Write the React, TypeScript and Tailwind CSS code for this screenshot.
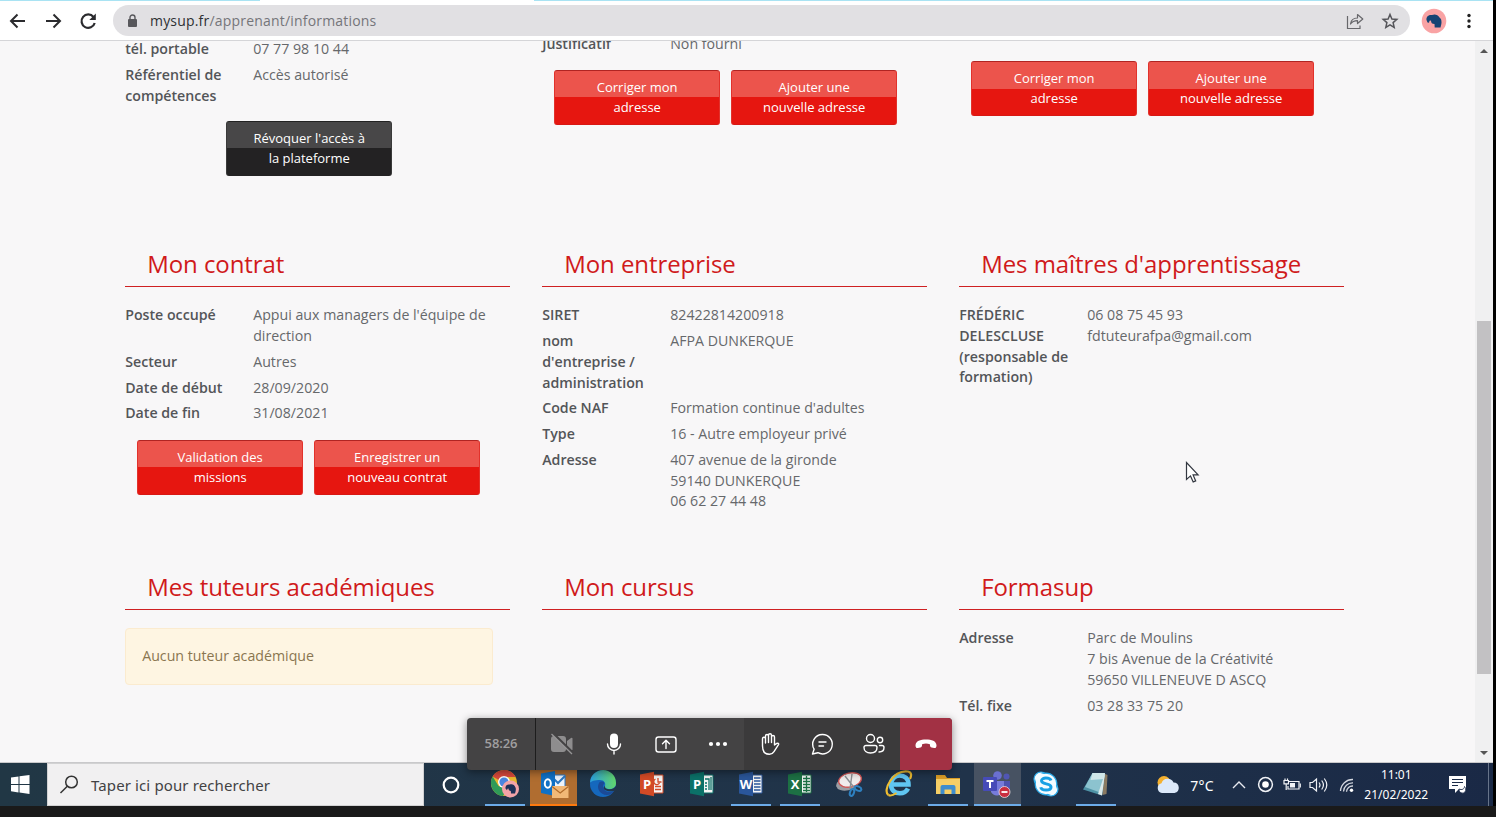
import type { ReactNode } from "react";

type RowData = { label: ReactNode; value: ReactNode[] };

function Row({ label, value }: RowData) {
  return (
    <div className="mb-[5.1px] flex leading-[20.7px]">
      <div className="w-[128px] shrink-0 pr-3 font-semibold text-[#535558]">{label}</div>
      <div className="flex-1 whitespace-nowrap text-[#66686b]">
        {value.map((v, i) => (
          <div key={i}>{v}</div>
        ))}
      </div>
    </div>
  );
}

function Button({ lines, dark }: { lines: [string, string]; dark?: boolean }) {
  const tone = dark
    ? "border-[#3a3a3a] border-t-[#222] border-b-[#232223] bg-[linear-gradient(#484748_50%,#232223_50%)]"
    : "border-[#e2322c] border-t-[#b02422] border-b-[#d81814] bg-[linear-gradient(#ec544c_50%,#e61610_50%)]";
  return (
    <button
      className={`flex h-[55px] w-[166px] shrink-0 flex-col items-center justify-center rounded-[3px] border pb-px text-[13px] leading-[20px] text-white ${tone}`}
    >
      <span>{lines[0]}</span>
      <span>{lines[1]}</span>
    </button>
  );
}

function Section({ title, children }: { title: string; children?: ReactNode }) {
  return (
    <section className="w-[384.5px]">
      <h2 className="mb-[18.3px] h-[44px] border-b border-[#cf2022] pl-[22px] text-[24px] leading-[42px] tracking-[-0.07px] text-[#d01a1b]">
        {title}
      </h2>
      {children}
    </section>
  );
}

function BrowserBar() {
  return (
    <header className="flex h-[41px] shrink-0 flex-col border-b border-[#d5d5d8] bg-white">
      <div className="flex h-px justify-between">
        <div className="w-[260px] bg-[#a9e3f3]" />
        <div className="w-[959px] bg-[#a9e3f3]" />
      </div>
      <div className="flex flex-1 items-center">
        <div className="flex w-[113px] items-center gap-[15px] pl-2 text-[#2b2b2e]">
          {["M17 10H3M9.5 3.5 3 10l6.500 6.500", "M3 10h14M10.500 3.500 17 10l-6.500 6.500"].map((d) => (
            <svg key={d} width="20" height="20" viewBox="0 0 20 20" fill="none" stroke="currentColor" strokeWidth="2">
              <path d={d} />
            </svg>
          ))}
          <svg width="20" height="20" viewBox="0 0 20 20" fill="none" stroke="currentColor" strokeWidth="2.200">
            <path d="M15.500 6A6.700 6.700 0 1 0 16.700 12" />
            <path d="M17.800 2.500v6.500h-6.500z" fill="currentColor" stroke="none" />
          </svg>
        </div>
        <div className="flex h-[31px] w-[1297px] items-center rounded-full bg-[#e1e0e3] pl-[14px] pr-[11px]">
          <svg width="11" height="14" viewBox="0 0 11 14">
            <rect x="1" y="5" width="9" height="8" rx="1" fill="#58585c" />
            <path d="M3 5.500V3.500a2.500 2.500 0 0 1 5 0v2" fill="none" stroke="#58585c" strokeWidth="1.400" />
          </svg>
          <div className="ml-3 flex-1 font-['Open_Sans',sans-serif] text-[14px] tracking-[0.19px] text-[#75757a]">
            <span className="text-[#2e3033]">mysup.fr</span>/apprenant/informations
          </div>
          <svg width="18" height="18" viewBox="0 0 18 18" fill="none" stroke="#67676b" strokeWidth="1.200">
            <path d="M1.500 4v12.500h12.500v-3" />
            <path d="M4.500 12C5 8 7.500 6 11.500 6V2.500L16.800 7l-5.300 4.500V8.700C8.500 8.700 6.200 9.500 4.500 12z" strokeLinejoin="round" />
          </svg>
          <svg className="ml-[17px]" width="18" height="18" viewBox="0 0 18 18" fill="none" stroke="#55555a" strokeWidth="1.500">
            <path d="m9 2.500 1.900 4.500 4.900.4-3.700 3.200 1.100 4.800L9 12.900l-4.200 2.500 1.100-4.800-3.700-3.200 4.900-.4z" />
          </svg>
        </div>
        <svg className="ml-[11px]" width="26" height="26" viewBox="0 0 26 26">
          <circle cx="13" cy="13" r="12.300" fill="#f9a3a4" />
          <path d="M5.500 12C5 8.500 8 6.500 11 7c3-1.500 6 0 7.500 2.500 1.700 1.200 2 2.500 2 5 0 1.500-.5 2.500-1 5h-5.800l-.2-3.500c-2.500 0-3.500-1-3.500-3.500l-1.500.3-.5 2-1.500-.3z" fill="#154373" />
        </svg>
        <svg className="ml-[19px]" width="6" height="18" viewBox="0 0 6 18" fill="#222">
          <circle cx="3" cy="3.500" r="1.700" />
          <circle cx="3" cy="9" r="1.700" />
          <circle cx="3" cy="14.500" r="1.700" />
        </svg>
      </div>
    </header>
  );
}

function Scrollbar() {
  return (
    <div className="flex w-[18px] shrink-0 flex-col items-center bg-[#f0f0f1]">
      <svg className="mt-[6px]" width="8" height="8" viewBox="0 0 8 8">
        <path d="M0 6 4 2l4 4z" fill="#555" />
      </svg>
      <div className="mt-[266px] h-[353px] w-[14px] bg-[#c2c1c3]" />
      <svg className="mt-[75px]" width="8" height="8" viewBox="0 0 8 8">
        <path d="M0 2h8L4 6z" fill="#555" />
      </svg>
    </div>
  );
}

function CallBar() {
  const stroke = { fill: "none", stroke: "#fff", strokeWidth: 1.400, strokeLinecap: "round", strokeLinejoin: "round" } as const;
  const cell = "flex w-[52px] items-center justify-center";
  return (
    <div className="absolute left-[467px] top-[718px] flex h-[52px] w-[485px] overflow-hidden rounded-[4px] bg-[#444344] shadow-[0_2px_8px_rgba(0,0,0,0.45)]">
      <div className="flex w-[69px] items-center justify-center border-r border-[#1d1d1d] font-['Open_Sans',sans-serif] text-[13px] font-semibold tracking-[-0.1px] text-[#a09fa0]">
        58:26
      </div>
      <div className={cell}>
        <svg width="24" height="24" viewBox="0 0 24 24">
          <path d="M4 4h9a3 3 0 0 1 3 3v10a3 3 0 0 1-3 3H4a3 3 0 0 1-3-3V7a3 3 0 0 1 3-3zm13 5 4-3q1.500-.5 1.500.5v11q0 1-1.500.5l-4-3z" fill="#8e8d8e" />
          <path d="m2.500 1 20.500 20" stroke="#444344" strokeWidth="2.500" />
          <path d="m1.500 2 20.500 20" stroke="#969596" strokeWidth="1.300" />
        </svg>
      </div>
      <div className={cell}>
        <svg width="24" height="24" viewBox="0 0 24 24">
          <rect x="8" y="1.500" width="8" height="14.500" rx="4" fill="#fff" />
          <path d="M5.500 12a6.500 6.500 0 0 0 13 0M12 18.500V22" {...stroke} />
        </svg>
      </div>
      <div className={cell}>
        <svg width="24" height="24" viewBox="0 0 24 24">
          <rect x="2" y="5" width="20" height="15" rx="2.500" {...stroke} />
          <path d="M12 16.500v-8M8.500 11.800 12 8.300l3.500 3.500" {...stroke} />
        </svg>
      </div>
      <div className={cell}>
        <svg width="20" height="6" viewBox="0 0 20 6" fill="#fff">
          <circle cx="3" cy="3" r="2.100" />
          <circle cx="10" cy="3" r="2.100" />
          <circle cx="17" cy="3" r="2.100" />
        </svg>
      </div>
      <div className="flex bg-[#3b3a3b]">
        <div className={cell}>
          <svg width="24" height="24" viewBox="0 0 24 24">
            <path d="M4.500 14V6.800a1.500 1.500 0 0 1 3 0V11 4a1.500 1.500 0 0 1 3 0v6.500V3.200a1.500 1.500 0 0 1 3 0v7.300V5a1.500 1.500 0 0 1 3 0v8l2.300-1.600c1-.6 2.200.3 1.700 1.200l-4.500 7c-1.200 1.900-2.500 2.700-4.500 2.700-4.500 0-7-3-7-8.300z" {...stroke} />
          </svg>
        </div>
        <div className={cell}>
          <svg width="24" height="24" viewBox="0 0 24 24">
            <path d="M12.500 2.500a9.700 9.700 0 1 1-4.600 18.200L2.500 22l1.600-4.800A9.700 9.700 0 0 1 12.500 2.500zM9 10h7M9 14h4.500" {...stroke} />
          </svg>
        </div>
        <div className={cell}>
          <svg width="24" height="24" viewBox="0 0 24 24">
            <circle cx="8.500" cy="6.500" r="4" {...stroke} />
            <circle cx="18" cy="8" r="2.700" {...stroke} />
            <path d="M4 13.500h9a2 2 0 0 1 2 2c0 3.500-2.500 5.500-6.500 5.500S2 19 2 15.500a2 2 0 0 1 2-2zM17.500 13.500H20a2 2 0 0 1 2 2c0 3-2 4.500-5 4.500" {...stroke} />
          </svg>
        </div>
      </div>
      <div className="flex w-[52px] items-center justify-center bg-[#a23144]">
        <svg width="24" height="12" viewBox="0 0 24 12">
          <path d="M1.500 7.500C1.500 3 6.500 1.500 12 1.500S22.500 3 22.500 7.500c0 1.800-.8 2.800-2.300 2.500l-2.600-.5c-1-.2-1.500-.8-1.600-2l-.1-1.300q-3.900-1.200-7.800 0L8 7.500c-.1 1.200-.6 1.800-1.600 2L3.800 10c-1.500.3-2.300-.7-2.300-2.500z" fill="#fff" />
        </svg>
      </div>
    </div>
  );
}

function OfficeIcon({ letter, color, lines }: { letter: string; color: string; lines: string }) {
  return (
    <svg width="26" height="26" viewBox="0 0 26 26">
      <path d="M14 4h10v18H14z" fill="#f5f5f5" stroke={color} strokeWidth="1" />
      <path d={lines} stroke={color} strokeWidth="1.300" fill="none" />
      <path d="M1 3.500 15 .8v24.400L1 22.500z" fill={color} />
      <text x="8" y="18" textAnchor="middle" fill="#fff" fontSize="13" fontWeight="700" fontFamily="Open Sans, sans-serif">
        {letter}
      </text>
    </svg>
  );
}

const icons = {
  chrome: (
    <svg width="30" height="30" viewBox="0 0 30 30">
      <circle cx="14" cy="14" r="13" fill="#e9b92f" />
      <path d="M14 14 2.700 7.500A13 13 0 0 1 25.500 8L14 8z" fill="#d9493c" />
      <path d="M2.700 7.500A13 13 0 0 0 13 27l5-8-9.500-2z" fill="#2f9a58" />
      <circle cx="14" cy="13" r="6" fill="#fff" />
      <circle cx="14" cy="13" r="4.600" fill="#4a86e0" />
      <circle cx="20.500" cy="20" r="8.500" fill="#f3a4a8" />
      <path d="M15.500 19.500c-.5-3 2-4.500 4.200-4 2.500-1 5 .5 5.500 2.500 1 1 .8 4-.2 6.500h-4l-.2-2.500c-1.500 0-2.300-1-2.300-2.500l-1 .3-.5 1.500z" fill="#1d3157" />
    </svg>
  ),
  outlook: (
    <svg width="30" height="30" viewBox="0 0 30 30">
      <path d="M13 6h13v14H13z" fill="#eef4fb" stroke="#2b78c4" />
      <path d="m14 9 5 5 7-7" fill="none" stroke="#2b78c4" strokeWidth="2" />
      <path d="M2 4.500 16 2v25L2 24z" fill="#1071c6" />
      <ellipse cx="8.800" cy="14.500" rx="3" ry="4.200" fill="none" stroke="#fff" strokeWidth="2" />
      <path d="M13 17h16.500v12H13z" fill="#f1b877" />
      <path d="m13 17.500 8.200 6.500 8.200-6.500" fill="none" stroke="#b06a2a" strokeWidth="1.200" />
    </svg>
  ),
  edge: (
    <svg width="28" height="28" viewBox="0 0 28 28">
      <defs>
        <linearGradient id="edgeTop" x1="0" x2="1">
          <stop offset="0" stopColor="#2a9fe0" />
          <stop offset="1" stopColor="#62d66b" />
        </linearGradient>
      </defs>
      <circle cx="14" cy="14" r="13" fill="#1568bd" />
      <path d="M1 13A13 13 0 0 1 27 13c0 4-3 6-6.500 6-3 0-5-1-4.500-3 1-3-1-6-5-6-5 0-9 1-10 3z" fill="url(#edgeTop)" />
      <path d="M10 13c-3 5 1 12 8 12 3 0 5.500-1.500 7-4-5 2-10 1-11-4-.3-2 1-3 1.500-4-2-2.200-4.500-1.500-5.500 0z" fill="#1b4a96" />
      <path d="M16 16c-.5 2.500 2 3.500 5 3.200 2.500-.2 5-1.200 6.500-4v4.500c-3 2-8 2.300-11.500.3-2-1.500-1.500-3-0-4z" fill="#21364a" />
    </svg>
  ),
  powerpoint: <OfficeIcon letter="P" color="#d24a26" lines="M16 15.500h6M16 18.500h6M19 7v4h3.500M16.500 8a3 3 0 1 0 4 4" />,
  publisher: <OfficeIcon letter="P" color="#0b7168" lines="M16 8h4v11M16 12h2M16 15h2M16 18h2M22 6v13" />,
  word: <OfficeIcon letter="W" color="#2a569a" lines="M16 7h6.500M16 10h6.500M16 13h6.500M16 16h6.500M16 19h6.500" />,
  excel: <OfficeIcon letter="X" color="#1d7044" lines="M16 7.500h7M16 10.500h7M16 13.500h7M16 16.500h7M16 19.500h7M19.500 5v16" />,
  snip: (
    <svg width="28" height="28" viewBox="0 0 28 28">
      <ellipse cx="12" cy="14" rx="11" ry="6.500" transform="rotate(-12 12 14)" fill="#9a9da3" />
      <ellipse cx="15" cy="10" rx="11.500" ry="7" transform="rotate(-12 15 10)" fill="#f1eced" stroke="#cf5555" strokeWidth="1.300" />
      <path d="m10 6 11 14M17 4l-2 15" stroke="#8b8f94" strokeWidth="1.400" />
      <ellipse cx="17" cy="22.500" rx="2" ry="3.500" transform="rotate(20 17 22.500)" fill="none" stroke="#2e80c0" strokeWidth="2" />
      <ellipse cx="23" cy="18.500" rx="3.500" ry="2" transform="rotate(25 23 18.500)" fill="none" stroke="#2e80c0" strokeWidth="2" />
    </svg>
  ),
  explorer: (
    <svg width="28" height="28" viewBox="0 0 28 28" fill="none">
      <path d="M6 14.500h17.500c0-6-4-9-9-9s-8.500 4-8.500 9c0 5.500 4 8.800 8.800 8.800 4 0 6.700-1.800 8.200-4.800" stroke="#60c6f2" strokeWidth="4.600" />
      <path d="M3.500 25C-3 21 8-.5 23 1.500c4 .8 3.500 4.500 2 7.500" stroke="#eebd31" strokeWidth="2.200" />
      <path d="M3.500 25c2 1 5 0 8-2" stroke="#eebd31" strokeWidth="2" />
    </svg>
  ),
  folder: (
    <svg width="26" height="24" viewBox="0 0 26 24">
      <path d="M1 3h9l2 3h13v15H1z" fill="#dc9e27" />
      <path d="M1 7h24v15H1z" fill="#f6cf66" />
      <path d="M5.500 22v-7q0-2 2-2h11q2 0 2 2v7h-4v-4.500h-7V22z" fill="#3e8dcd" />
    </svg>
  ),
  teams: (
    <svg width="30" height="28" viewBox="0 0 30 28">
      <circle cx="15.500" cy="5.500" r="4.300" fill="#6b70d0" />
      <circle cx="24.500" cy="6.500" r="3" fill="#5056b4" />
      <path d="M20 11h8v7a5 5 0 0 1-8 3z" fill="#4d53b0" />
      <path d="M9 11h13v8a7 7 0 0 1-13 3z" fill="#777cdb" />
      <rect x="1" y="7" width="14" height="14" rx="1" fill="#464bb8" />
      <path d="M4.500 11h7M8 11v7" stroke="#fff" strokeWidth="2" />
      <circle cx="22.500" cy="22" r="5.500" fill="#c92d3f" stroke="#e8dfe2" strokeWidth=".8" />
      <path d="M19.500 22h6" stroke="#fff" strokeWidth="1.800" />
    </svg>
  ),
  skype: (
    <svg width="26" height="26" viewBox="0 0 26 26">
      <g fill="#f4fbff" stroke="#29a9e8" strokeWidth="1.200">
        <circle cx="8" cy="8" r="7" />
        <circle cx="18" cy="18" r="7" />
        <circle cx="13" cy="13" r="10.800" />
      </g>
      <circle cx="8.500" cy="8.500" r="6" fill="#f4fbff" />
      <circle cx="17.500" cy="17.500" r="6" fill="#f4fbff" />
      <path d="M18 9.500C17 6.500 8.500 6 8.500 9.800c0 4 9.500 2.200 9.500 6.200 0 4.200-9.500 4-10.200.2" fill="none" stroke="#18a0e4" strokeWidth="3" />
    </svg>
  ),
  notepad: (
    <svg width="28" height="26" viewBox="0 0 28 26">
      <path d="m21 2 4.500 2-1 19-4 1z" fill="#8a7a62" />
      <path d="M10.500 2 23 2l-3 22.500L1 18.500z" fill="#4f93a6" />
      <path d="M10.500 2H23l-3.500 20L3 16z" fill="#8cc3cf" />
      <path d="M10.500 2H23l-1 6-13.500 1z" fill="#cfe6e8" />
      <path d="m23 2-3 22.500-4-1.500z" fill="#dbe9ea" />
    </svg>
  ),
};

const apps: { name: keyof typeof icons; open?: boolean; tone?: string }[] = [
  { name: "chrome", open: true },
  { name: "outlook", tone: "bg-[#b06d30] border-[#ff7a0e]" },
  { name: "edge" },
  { name: "powerpoint" },
  { name: "publisher" },
  { name: "word", open: true },
  { name: "excel", open: true },
  { name: "snip" },
  { name: "explorer" },
  { name: "folder", open: true },
  { name: "teams", tone: "bg-[#475262] border-[#6cabe8]" },
  { name: "skype" },
  { name: "notepad", open: true },
];

function Taskbar() {
  return (
    <footer className="flex h-[43px] shrink-0 items-stretch bg-[linear-gradient(90deg,#213745,#20334a_65%,#1a2946)] font-['Noto_Sans',sans-serif] text-white">
      <div className="flex w-[47px] items-center pl-[11px]">
        <svg width="19" height="19" viewBox="0 0 19 19" fill="#fff">
          <path d="M0 2.600 7.500 1.500V9H0zM8.500 1.300 18.500 0v9h-10zM0 10h7.500v7.400L0 16.300zM8.500 10h10v9l-10-1.400z" />
        </svg>
      </div>
      <div className="flex w-[377px] items-center border border-[#d2d2d3] bg-[#f1f0f1] pl-[11px] text-[#424244]">
        <svg width="20" height="20" viewBox="0 0 20 20" fill="none" stroke="#333" strokeWidth="1.500">
          <circle cx="12.500" cy="7" r="5.800" />
          <path d="M8.300 11.200 1.500 18" />
        </svg>
        <span className="ml-3 pt-px text-[15px] tracking-[0.12px]">Taper ici pour rechercher</span>
      </div>
      <div className="flex w-[56px] items-center justify-center pr-[3px]">
        <svg width="20" height="20" viewBox="0 0 20 20">
          <circle cx="10" cy="10" r="7.300" fill="none" stroke="#fff" strokeWidth="2.200" />
        </svg>
      </div>
      <div className="flex">
        {apps.map((a) => (
          <div key={a.name} className="flex w-[49.25px] justify-center">
            <div
              className={`flex items-center justify-center border-b-2 pt-px ${a.tone ? "w-[47px]" : "w-[40px]"} ${
                a.tone ?? (a.open ? "border-[#6cabe8]" : "border-transparent")
              }`}
            >
              {icons[a.name]}
            </div>
          </div>
        ))}
      </div>
      <div className="ml-[36px] flex items-center">
        <svg width="24" height="20" viewBox="0 0 24 20">
          <circle cx="8" cy="7.500" r="6.500" fill="#f5b12f" />
          <path d="M6 18a5 5 0 0 1-.5-9.800 6.500 6.500 0 0 1 12-.7A5.300 5.300 0 0 1 18.500 18z" fill="#dce9fa" />
        </svg>
        <span className="ml-[10px] w-[33px] pt-px text-[14px] tracking-[0.2px]">7°C</span>
        <svg className="ml-[9px]" width="14" height="10" viewBox="0 0 14 10" fill="none" stroke="#e8eaf0" strokeWidth="1.400">
          <path d="m1 8 6-6 6 6" />
        </svg>
        <svg className="ml-[11px]" width="17" height="17" viewBox="0 0 17 17">
          <circle cx="8.500" cy="8.500" r="6.900" fill="none" stroke="#f0f2f6" strokeWidth="1.500" />
          <circle cx="8.500" cy="8.500" r="3.300" fill="#fff" />
        </svg>
        <svg className="ml-[9px]" width="18" height="14" viewBox="0 0 18 14" fill="none" stroke="#f0f2f6" strokeWidth="1.200">
          <path d="M6 3.500h10V11H5V8M1 2.500h4.500v3.300H1zM2 .5v2M4.500.5v2M3.200 6v6" />
          <path d="M7 5h5v4.500H7z" fill="#f0f2f6" stroke="none" />
          <path d="M17.300 5.500v4" />
        </svg>
        <svg className="ml-[8px]" width="19" height="16" viewBox="0 0 19 16" fill="none" stroke="#f0f2f6" strokeWidth="1.200">
          <path d="M1 5.500h2.500L7.500 2v12l-4-3.500H1zM10 5.500q2 2.500 0 5M12.700 3.500q3.500 4.500 0 9M15.300 1.500q5 6.500 0 13" />
        </svg>
        <svg className="ml-[11px]" width="15" height="16" viewBox="0 0 15 16" fill="none" stroke="#d2d6df" strokeWidth="1.300">
          <path d="M1.500 14A12 12 0 0 1 14 2.500M4.500 14.500A9 9 0 0 1 14 5.800M7.500 14.700A6 6 0 0 1 14 9" />
          <circle cx="12.500" cy="13.300" r="1.700" fill="#fff" stroke="none" />
        </svg>
        <div className="ml-[7px] w-[70px] whitespace-nowrap text-center text-[12px] leading-[19.500px]">
          <div>11:01</div>
          <div>21/02/2022</div>
        </div>
        <svg className="ml-[17px]" width="20" height="19" viewBox="0 0 20 19">
          <path d="M1 1h17v13h-7l-4 4v-4H1z" fill="#fff" />
          <path d="M4 4.500h11M4 7.500h11M4 10.500h6" stroke="#1b2a47" strokeWidth="1.200" />
          <path d="M11 14a3.500 3.500 0 0 0 6 3c1.500-2 .5-4.500-.5-5.500 0 2-2 4-5.500 2.500z" fill="#fff" stroke="#1b2a47" strokeWidth=".8" />
        </svg>
      </div>
      <div className="ml-auto mr-[4px] w-px bg-[#67748a]" />
    </footer>
  );
}

export default function App() {
  return (
    <div className="relative flex h-[817px] w-[1496px] flex-col overflow-hidden bg-[#1a1a1a]">
      <div className="flex h-[806px] w-full flex-col border-r-[3px] border-black">
        <BrowserBar />
        <div className="flex h-[722px] shrink-0 overflow-hidden border-b border-[#c9c9cb] bg-[#f8f7f8]">
          <main className="flex-1 overflow-hidden pl-[125.2px] font-['Open_Sans',sans-serif] text-[14.2px]">
            <div className="flex h-[202px] gap-[32.5px]">
              <div className="-mt-[1.600px] w-[384.5px]">
                <Row label="tél. portable" value={["07 77 98 10 44"]} />
                <Row label="Référentiel de compétences" value={["Accès autorisé"]} />
                <div className="mt-[14.5px] pl-[101px]">
                  <Button dark lines={["Révoquer l'accès à", "la plateforme"]} />
                </div>
              </div>
              <div className="-mt-[6.700px] w-[384.5px]">
                <Row label="Justificatif" value={["Non fourni"]} />
                <div className="mt-[15px] flex gap-[11px] pl-3">
                  <Button lines={["Corriger mon", "adresse"]} />
                  <Button lines={["Ajouter une", "nouvelle adresse"]} />
                </div>
              </div>
              <div className="mt-[20px] flex w-[384.5px] gap-[11px] pl-3">
                <Button lines={["Corriger mon", "adresse"]} />
                <Button lines={["Ajouter une", "nouvelle adresse"]} />
              </div>
            </div>
            <div className="flex h-[323px] gap-[32.5px]">
              <Section title="Mon contrat">
                <Row label="Poste occupé" value={["Appui aux managers de l'équipe de", "direction"]} />
                <Row label="Secteur" value={["Autres"]} />
                <Row label="Date de début" value={["28/09/2020"]} />
                <Row label="Date de fin" value={["31/08/2021"]} />
                <div className="mt-[15.5px] flex gap-[11px] pl-3">
                  <Button lines={["Validation des", "missions"]} />
                  <Button lines={["Enregistrer un", "nouveau contrat"]} />
                </div>
              </Section>
              <Section title="Mon entreprise">
                <Row label="SIRET" value={["82422814200918"]} />
                <Row label={<>nom<br />d'entreprise /<br />administration</>} value={["AFPA DUNKERQUE"]} />
                <Row label="Code NAF" value={["Formation continue d'adultes"]} />
                <Row label="Type" value={["16 - Autre employeur privé"]} />
                <Row label="Adresse" value={["407 avenue de la gironde", "59140 DUNKERQUE", "06 62 27 44 48"]} />
              </Section>
              <Section title="Mes maîtres d'apprentissage">
                <Row
                  label={<>FRÉDÉRIC<br />DELESCLUSE<br />(responsable de<br />formation)</>}
                  value={["06 08 75 45 93", "fdtuteurafpa@gmail.com"]}
                />
              </Section>
            </div>
            <div className="flex gap-[32.5px]">
              <Section title="Mes tuteurs académiques">
                <div className="-mt-[0.8px] flex h-[57px] w-[368px] items-center rounded-[4px] border border-[#fbebcf] bg-[#fef5e2] pb-px pl-4 text-[#8a7650]">
                  Aucun tuteur académique
                </div>
              </Section>
              <Section title="Mon cursus" />
              <Section title="Formasup">
                <Row label="Adresse" value={["Parc de Moulins", "7 bis Avenue de la Créativité", "59650 VILLENEUVE D ASCQ"]} />
                <Row label="Tél. fixe" value={["03 28 33 75 20"]} />
              </Section>
            </div>
          </main>
          <Scrollbar />
        </div>
        <Taskbar />
      </div>
      <CallBar />
      <svg className="absolute left-[1185px] top-[461px]" width="15" height="23" viewBox="0 0 15 23">
        <path d="M1.500 1.500v17l4-3.600 2.700 6 2.500-1-2.600-6h5z" fill="#fff" stroke="#333740" strokeWidth="1.200" />
      </svg>
    </div>
  );
}
